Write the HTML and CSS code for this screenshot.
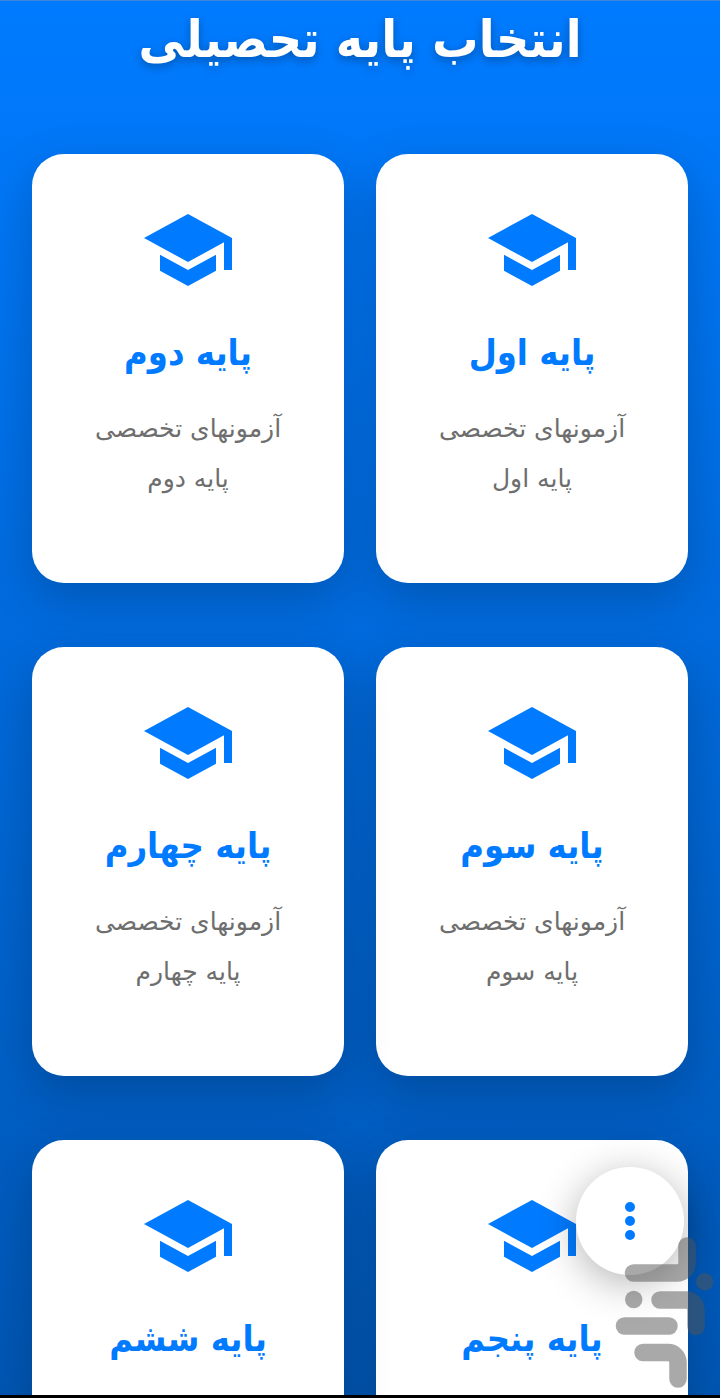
FILE: index.html
```html
<!DOCTYPE html>
<html lang="fa" dir="rtl">
<head>
<meta charset="utf-8">
<title>انتخاب پایه تحصیلی</title>
<link rel="stylesheet" href="styles.css">
</head>
<body>
<main class="screen">
  <h1 class="title">انتخاب پایه تحصیلی</h1>
  <section class="grid">
    <article class="card">
      <svg class="cap" viewBox="0 0 24 24"><path d="M5 13.18v4L12 21l7-3.82v-4L12 17l-7-3.82zM12 3L1 9l11 6 9-4.91V17h2V9L12 3z"/></svg>
      <h2 class="name">پایه اول</h2>
      <p class="desc">آزمونهای تخصصی<br>پایه اول</p>
    </article>
    <article class="card">
      <svg class="cap" viewBox="0 0 24 24"><path d="M5 13.18v4L12 21l7-3.82v-4L12 17l-7-3.82zM12 3L1 9l11 6 9-4.91V17h2V9L12 3z"/></svg>
      <h2 class="name">پایه دوم</h2>
      <p class="desc">آزمونهای تخصصی<br>پایه دوم</p>
    </article>
    <article class="card">
      <svg class="cap" viewBox="0 0 24 24"><path d="M5 13.18v4L12 21l7-3.82v-4L12 17l-7-3.82zM12 3L1 9l11 6 9-4.91V17h2V9L12 3z"/></svg>
      <h2 class="name">پایه سوم</h2>
      <p class="desc">آزمونهای تخصصی<br>پایه سوم</p>
    </article>
    <article class="card">
      <svg class="cap" viewBox="0 0 24 24"><path d="M5 13.18v4L12 21l7-3.82v-4L12 17l-7-3.82zM12 3L1 9l11 6 9-4.91V17h2V9L12 3z"/></svg>
      <h2 class="name">پایه چهارم</h2>
      <p class="desc">آزمونهای تخصصی<br>پایه چهارم</p>
    </article>
    <article class="card">
      <svg class="cap" viewBox="0 0 24 24"><path d="M5 13.18v4L12 21l7-3.82v-4L12 17l-7-3.82zM12 3L1 9l11 6 9-4.91V17h2V9L12 3z"/></svg>
      <h2 class="name">پایه پنجم</h2>
    </article>
    <article class="card">
      <svg class="cap" viewBox="0 0 24 24"><path d="M5 13.18v4L12 21l7-3.82v-4L12 17l-7-3.82zM12 3L1 9l11 6 9-4.91V17h2V9L12 3z"/></svg>
      <h2 class="name">پایه ششم</h2>
    </article>
  </section>
  <button class="fab" type="button" aria-label="منو"><span class="dot"></span><span class="dot"></span><span class="dot"></span></button>
  <svg class="mark" viewBox="0 0 120 168" aria-hidden="true">
    <g fill="none" stroke-width="17.5" stroke-linecap="round">
      <path d="M87 16V33a10 10 0 0 1-10 10H33.5"/>
      <path d="M60 70H86a10 10 0 0 1 10 10V96.5"/>
      <path d="M24.5 96H69"/>
      <path d="M43 122.5H68a10 10 0 0 1 10 10V149"/>
    </g>
    <circle cx="33.7" cy="69.5" r="8.7"/>
    <circle cx="104.7" cy="51.7" r="8.7"/>
  </svg>
</main>
</body>
</html>
```
FILE: styles.css
```css
* { box-sizing: border-box; }
html, body { margin: 0; padding: 0; height: 1398px; overflow: hidden; background: #000; }
body { font-family: "DejaVu Sans", sans-serif; }
.screen {
  position: relative;
  height: 1395px;
  overflow: hidden;
  padding: 0 32px;
  border-top: 1px solid #3b86d9;
  background: linear-gradient(180deg, #007bff 0, #0056b3 100%);
}
.title {
  margin: 0;
  padding-top: 6px;
  height: 153px;
  color: #fff;
  font-family: "DejaVu Sans Condensed", "DejaVu Sans", sans-serif;
  font-size: 51.5px;
  line-height: 64px;
  font-weight: 700;
  text-align: center;
  text-shadow: 0 3px 10px rgba(0,0,0,.3);
}
.grid { display: grid; grid-template-columns: 312px 312px; column-gap: 32px; row-gap: 64px; }
.card {
  height: 429px;
  padding-top: 48px;
  background: #fff;
  border-radius: 32px;
  text-align: center;
  box-shadow: 0 16px 48px rgba(0,0,0,.2);
}
.cap { display: block; width: 96px; height: 96px; margin: 0 auto; fill: #007bff; }
.name {
  margin: 23px 0 1px;
  color: #007bff;
  font-family: "DejaVu Sans Condensed", "DejaVu Sans", sans-serif;
  font-size: 36px;
  line-height: 64px;
  font-weight: 700;
}
.desc { margin: 19px 0 0; color: #6e6e6e; font-size: 25px; line-height: 50px; }
.fab {
  position: absolute;
  left: 576px;
  top: 1166px;
  width: 108px;
  height: 108px;
  padding: 0;
  border: 0;
  border-radius: 50%;
  background: #fff;
  box-shadow: 0 8px 40px rgba(0,0,0,.3);
  display: flex;
  flex-direction: column;
  align-items: center;
  justify-content: center;
  gap: 4px;
}
.dot { width: 10px; height: 10px; border-radius: 50%; background: #007bff; }
.mark { position: absolute; left: 600px; top: 1229px; width: 120px; height: 168px; opacity: .5; }
.mark g { stroke: #555; }
.mark circle { fill: #555; }
```
